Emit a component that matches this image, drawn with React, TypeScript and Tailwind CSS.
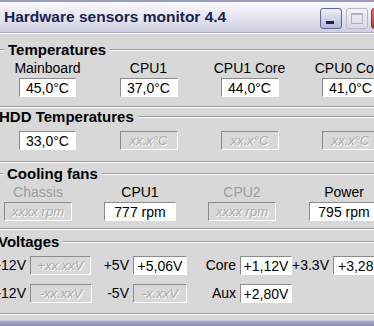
import React from 'react';

const font = { fontFamily: '"Liberation Sans", Arial, sans-serif' };

function Etched() {
    return <div className="h-[2px] border-t border-t-[#9c9c9c] border-b border-b-white" />;
}

function GroupHeader({ title, dash, shift }: { title: string; dash: number; shift: string }) {
    return (
        <div className={`flex items-center h-[16px] ${shift}`}>
            {dash > 0 && <div className="h-[2px] border-t border-t-[#9c9c9c] border-b border-b-white" style={{ width: dash }} />}
            <span className="px-[4px] text-[15px] leading-[16px] font-bold text-black whitespace-nowrap">{title}</span>
            <div className="flex-1"><Etched /></div>
        </div>
    );
}

function Field({ value, on = true, w, center = true }: { value: string; on?: boolean; w: string; center?: boolean }) {
    return (
        <div
            className={`${w} h-[19px] shrink-0 flex items-center ${center ? 'justify-center' : 'pl-[4px]'} border-t border-l border-t-[#8a8a8a] border-l-[#8a8a8a] border-b border-r border-b-white border-r-white leading-none whitespace-nowrap ${on ? 'bg-white text-black text-[14px]' : 'bg-[#d8d8d8] text-[#ababab] text-[13px] italic [text-shadow:1px_1px_0_#fff]'}`}
        >
            {value}
        </div>
    );
}

function Col({ label, value, on = true, w, colW }: { label?: string; value: string; on?: boolean; w: string; colW: string }) {
    return (
        <div className={`${colW} shrink-0 flex flex-col items-center`}>
            {label && (
                <div className={`h-[14px] leading-[14px] text-[14px] whitespace-nowrap ${on ? 'text-black' : 'text-[#9c9c9c]'}`}>{label}</div>
            )}
            {label && <div className="h-[3px]" />}
            <Field value={value} on={on} w={w} />
        </div>
    );
}

function VLabel({ text, w }: { text: string; w: string }) {
    return <div className={`${w} shrink-0 text-right pr-[4px] text-[14px] leading-[19px] whitespace-nowrap text-black`}>{text}</div>;
}

export default function App() {
    return (
        <div className="w-[374px] h-[326px] overflow-hidden bg-[#d8d8d8] flex flex-col" style={font}>
            {/* title bar */}
            <div className="h-[33px] shrink-0 relative border-t-[2px] border-t-[#9a9cc0] border-b border-b-[#a8a8bc] bg-gradient-to-b from-[#f8f8fc] via-[#e6e6f0] to-[#cfd0e0] flex items-center">
                <span className="pl-[4px] text-[15.5px] font-semibold text-[#1a2250]">Hardware sensors monitor 4.4</span>
                <div className="absolute left-[320px] top-[6px] w-[22px] h-[21px] rounded-[3px] border border-[#5c6699] bg-gradient-to-b from-[#f0f0f8] to-[#b4b8d4]">
                    <div className="absolute left-[5px] top-[12px] w-[8px] h-[3px] bg-[#1a2250]" />
                </div>
                <div className="absolute left-[346px] top-[6px] w-[22px] h-[21px] rounded-[3px] border border-[#b8b8c8] bg-gradient-to-b from-[#f4f4f8] to-[#d8d8e4]">
                    <div className="absolute left-[4px] top-[4px] w-[12px] h-[11px] border border-[#b0b0c0] border-t-[2px]" />
                </div>
                <div className="absolute left-[371px] top-[6px] w-[22px] h-[21px] rounded-[3px] border border-[#9a3030] bg-gradient-to-b from-[#e87060] to-[#c03020]" />
            </div>
            <div className="h-[1px] bg-white shrink-0" />

            {/* Temperatures */}
            <div className="mt-[8px]">
                <GroupHeader title="Temperatures" dash={4} shift="" />
                <div className="mt-[3px] flex ml-[-3px]">
                    <Col label="Mainboard" value="45,0°C" w="w-[57px]" colW="w-[101px]" />
                    <Col label="CPU1" value="37,0°C" w="w-[58px]" colW="w-[101px]" />
                    <Col label="CPU1 Core" value="44,0°C" w="w-[58px]" colW="w-[101px]" />
                    <Col label="CPU0 Core" value="41,0°C" w="w-[58px]" colW="w-[101px]" />
                </div>
                <div className="mt-[9px]"><Etched /></div>
            </div>

            {/* HDD Temperatures */}
            <div className="mt-[1px]">
                <GroupHeader title="HDD Temperatures" dash={0} shift="ml-[-5px]" />
                <div className="mt-[6px] flex ml-[-3px]">
                    <Col value="33,0°C" w="w-[57px]" colW="w-[101px]" />
                    <Col value="xx.x°C" on={false} w="w-[58px]" colW="w-[101px]" />
                    <Col value="xx.x°C" on={false} w="w-[58px]" colW="w-[101px]" />
                    <Col value="xx.x°C" on={false} w="w-[58px]" colW="w-[101px]" />
                </div>
                <div className="mt-[11px]"><Etched /></div>
            </div>

            {/* Cooling fans */}
            <div className="mt-[3px]">
                <GroupHeader title="Cooling fans" dash={3} shift="" />
                <div className="mt-[3px] flex ml-[-13px]">
                    <Col label="Chassis" value="xxxx rpm" on={false} w="w-[68px]" colW="w-[102px]" />
                    <Col label="CPU1" value="777 rpm" w="w-[72px]" colW="w-[102px]" />
                    <Col label="CPU2" value="xxxx rpm" on={false} w="w-[68px]" colW="w-[102px]" />
                    <Col label="Power" value="795 rpm" w="w-[71px]" colW="w-[102px]" />
                </div>
                <div className="mt-[7px]"><Etched /></div>
            </div>

            {/* Voltages */}
            <div className="mt-[4px]">
                <GroupHeader title="Voltages" dash={0} shift="ml-[-6px]" />
                <div className="mt-[6px] flex ml-[-36px]">
                    <VLabel text="+12V" w="w-[66px]" />
                    <Field value="+xx.xxV" on={false} w="w-[61px]" />
                    <VLabel text="+5V" w="w-[42px]" />
                    <Field value="+5,06V" w="w-[54px]" />
                    <VLabel text="Core" w="w-[53px]" />
                    <Field value="+1,12V" w="w-[52px]" />
                    <VLabel text="+3.3V" w="w-[41px]" />
                    <Field value="+3,28V" w="w-[54px]" center={false} />
                </div>
                <div className="mt-[9px] flex ml-[-36px]">
                    <VLabel text="-12V" w="w-[66px]" />
                    <Field value="-xx.xxV" on={false} w="w-[62px]" />
                    <VLabel text="-5V" w="w-[41px]" />
                    <Field value="-x.xxV" on={false} w="w-[54px]" />
                    <VLabel text="Aux" w="w-[53px]" />
                    <Field value="+2,80V" w="w-[52px]" />
                </div>
                <div className="mt-[10px]"><Etched /></div>
            </div>

            {/* window frame bottom */}
            <div className="mt-auto h-[6px] shrink-0 border-t border-t-[#c8c8d8] bg-gradient-to-b from-[#a8aacc] to-[#8a8cb4]" />
        </div>
    );
}
